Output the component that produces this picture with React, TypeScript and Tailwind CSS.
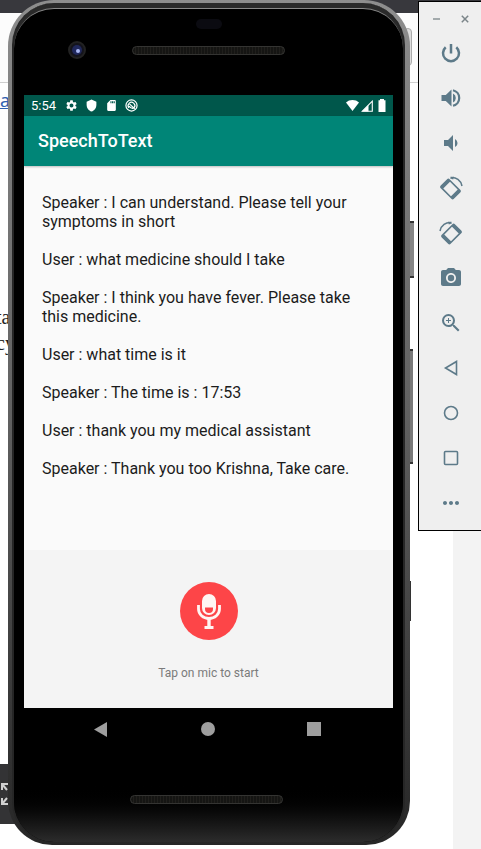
import type { ReactNode } from "react";
import {
  MdCameraAlt,
  MdMoreHoriz,
  MdSdCard,
  MdSettings,
  MdShield,
  MdVolumeDown,
  MdZoomIn,
} from "react-icons/md";

const messages = [
  { from: "Speaker", text: "I can understand. Please tell your symptoms in short" },
  { from: "User", text: "what medicine should I take" },
  { from: "Speaker", text: "I think you have fever. Please take this medicine." },
  { from: "User", text: "what time is it" },
  { from: "Speaker", text: "The time is : 17:53" },
  { from: "User", text: "thank you my medical assistant" },
  { from: "Speaker", text: "Thank you too Krishna, Take care." },
];

function RotateIcon({ mirrored = false }: { mirrored?: boolean }) {
  return (
    <svg width="24" height="24" viewBox="0 0 24 24" fill="none" className={mirrored ? "-scale-x-100" : ""}>
      <g transform="rotate(45 11.5 13)">
        <rect x="3" y="7.500" width="17" height="11" rx="1" stroke="currentColor" strokeWidth="1.600" />
        <path d="M3 7.500h3v11H3zM17 7.500h3v11h-3z" fill="currentColor" />
      </g>
      <path d="M11.500 1.600C17 .8 22 4.500 23 10" stroke="currentColor" strokeWidth="1.500" />
      <path d="M10.800 2.200l4-1.800-.6 3.200z" fill="currentColor" />
    </svg>
  );
}

const outline = { fill: "none", stroke: "currentColor", strokeWidth: 1.6 };

const tools: { label: string; icon: ReactNode }[] = [
  {
    label: "Power",
    icon: (
      <svg width="24" height="24" viewBox="0 0 24 24" fill="none" stroke="currentColor" strokeWidth="2.500">
        <path d="M12 3v9.500M6.700 6.200a8 8 0 1 0 10.600 0" />
      </svg>
    ),
  },
  {
    label: "Volume up",
    icon: (
      <svg width="24" height="24" viewBox="0 0 24 24" fill="currentColor">
        <path d="M2.500 9v6h4.300l5.700 5.500v-17L6.800 9zM14 7.500v9a5 5 0 0 0 0-9z" />
        <path d="M14 4.200a8 8 0 0 1 0 15.600" fill="none" stroke="currentColor" strokeWidth="2.200" />
      </svg>
    ),
  },
  { label: "Volume down", icon: <MdVolumeDown size={24} /> },
  { label: "Rotate left", icon: <RotateIcon /> },
  { label: "Rotate right", icon: <RotateIcon mirrored /> },
  { label: "Take screenshot", icon: <MdCameraAlt size={24} /> },
  { label: "Zoom", icon: <MdZoomIn size={24} /> },
  {
    label: "Back",
    icon: (
      <svg width="24" height="24" viewBox="0 0 24 24" {...outline}>
        <path d="M17.500 5.500v13L6.500 12z" />
      </svg>
    ),
  },
  {
    label: "Home",
    icon: (
      <svg width="24" height="24" viewBox="0 0 24 24" {...outline}>
        <circle cx="12" cy="12" r="6.500" />
      </svg>
    ),
  },
  {
    label: "Overview",
    icon: (
      <svg width="24" height="24" viewBox="0 0 24 24" {...outline}>
        <rect x="5.500" y="5.500" width="13" height="13" rx="1" />
      </svg>
    ),
  },
  { label: "More", icon: <MdMoreHoriz size={24} /> },
];

function Backdrop() {
  return (
    <div aria-hidden="true" className="absolute inset-0 overflow-hidden bg-white">
      <div className="h-[13px] bg-[#38383d]" />
      <div className="h-[70px] border-b border-[#cfcfcf] bg-[#fcfcfc]" />
      <div className="absolute top-[530px] right-0 bottom-0 w-7 bg-[#f3f3f3]" />
      <div className="absolute top-[88px] left-0 font-['Noto_Sans',sans-serif] text-lg leading-6 text-[#2f5fb0] underline">
        a
      </div>
      <div className="absolute top-[304px] left-0 font-['Liberation_Serif',serif] text-xl leading-[26px] text-[#222]">
        <div className="-ml-1">ta</div>
        <div className="-ml-1">cy</div>
      </div>
      <div className="absolute top-[764px] left-0 flex h-[60px] w-8 items-center bg-[#333335] text-[#d0d0d0]">
        <svg width="8" height="24" viewBox="0 0 8 24" fill="none" stroke="currentColor" strokeWidth="2">
          <path d="M2 8V2h6M2 2l5 6M2 16v6h6M2 22l5-6" />
        </svg>
      </div>
    </div>
  );
}

function SpeakerGrille() {
  return (
    <div className="h-[9px] w-[153px] rounded-full border border-[#343432] bg-[#161614] bg-[repeating-linear-gradient(90deg,#151513_0px,#151513_2px,#201f1c_2px,#201f1c_3px)]" />
  );
}

function StatusBar() {
  return (
    <div className="flex h-[21px] items-center bg-[#00574b] px-[7px] text-white">
      <span className="w-[34px] text-[13px] leading-5">5:54</span>
      <div className="flex flex-1 items-center gap-[7px]">
        <MdSettings size={13} />
        <MdShield size={13} />
        <MdSdCard size={13} />
        <svg width="13" height="13" viewBox="0 0 14 14" fill="none" stroke="currentColor" strokeWidth="1.300">
          <circle cx="7" cy="7" r="6" />
          <path d="M4.200 9.500A3.600 3.600 0 1 1 10 9.200M5 5.500l5.500 5M4.500 7.500c1 2 2.500 2.800 4.500 2.500" />
        </svg>
      </div>
      <div className="flex items-center gap-0.5">
        <svg width="13" height="11" viewBox="0 0 13 11" fill="currentColor">
          <path d="M0 2.500C3.500-.8 9.500-.8 13 2.500L6.500 11z" />
        </svg>
        <svg width="12" height="12" viewBox="0 0 12 12">
          <path d="M11.300 1.200v10H1.300z" fill="none" stroke="currentColor" strokeWidth="1.100" />
          <path d="M7.500 5v6.500H1z" fill="currentColor" />
        </svg>
        <svg width="11" height="13" viewBox="0 0 11 13" fill="currentColor">
          <path d="M5 1.300V0h4v1.300h1.500V13h-7V1.300z" />
        </svg>
      </div>
    </div>
  );
}

function MicIcon() {
  return (
    <svg width="26" height="38" viewBox="0 0 26 38" fill="none">
      <path
        fillRule="evenodd"
        fill="#fff5f3"
        d="M6 9a7 7 0 0 1 14 0v7a7 7 0 0 1-14 0zM9 15.500v1.500a4 4 0 0 0 8 0v-1.500z"
      />
      <path d="M2.500 13v4a10.500 9.500 0 0 0 21 0v-4" stroke="#fff5f3" strokeWidth="2.800" />
      <path d="M13 26v9" stroke="#fff5f3" strokeWidth="3.400" />
      <path d="M8.500 35.500h9" stroke="#fff5f3" strokeWidth="3" />
    </svg>
  );
}

function AppScreen() {
  return (
    <main className="bg-[#fafafa] font-[Roboto,sans-serif]">
      <StatusBar />
      <header className="flex h-[50px] items-center bg-[#008577] px-3.5 text-white shadow-[0_1px_2px_rgba(0,0,0,0.25)]">
        <h1 className="text-lg font-medium">SpeechToText</h1>
      </header>
      <div className="flex min-h-[384px] flex-col gap-[19px] pt-[27px] pr-6 pl-[18px] text-base leading-[19px] text-[#1c1c1c]">
        {messages.map((m) => (
          <p key={m.text}>{`${m.from} : ${m.text}`}</p>
        ))}
      </div>
      <footer className="flex h-[158px] flex-col items-center bg-[#f4f4f4] pt-8">
        <button
          type="button"
          aria-label="Start listening"
          className="flex size-[58px] items-center justify-center rounded-full bg-[#fd4548]"
        >
          <MicIcon />
        </button>
        <p className="mt-6 text-xs leading-[18px] text-[#7b7b7b]">Tap on mic to start</p>
      </footer>
    </main>
  );
}

function Phone() {
  return (
    <div className="relative mx-2 min-w-0 flex-1">
      <div className="absolute top-[28px] -right-0.5 h-[38px] w-2 rounded-sm border border-[#aaa] bg-[#ddd]" />
      <div className="absolute top-[221px] -right-1 h-[57px] w-2 border-y-2 border-[#333] bg-[#858585]" />
      <div className="absolute top-[349px] -right-[3px] h-[115px] w-2 border-y-2 border-[#333] bg-[#7a7a7a]" />
      <div className="absolute top-[581px] -right-px h-10 w-2 bg-[#333]" />
      <div className="relative rounded-t-[46px] rounded-b-[44px] bg-linear-to-b from-[#8e8e8e] via-[#606060] to-[#262626] pt-[3px] pr-[5px] pb-[3px] pl-1">
        <div className="rounded-t-[42px] rounded-b-[40px] border-x-2 border-[#262626] bg-[#2a2a2a] pt-[5px]">
          <div className="rounded-t-[40px] rounded-b-[40px] border-t border-[#8a8a8a] bg-black bg-linear-to-b from-black from-93% to-[#2c2c2c] px-2.5">
            <div className="flex h-[86px] flex-col items-center pt-2.5">
              <div className="h-2.5 w-[26px] rounded-full bg-[#0b0b11]" />
              <div className="mt-3 grid w-full grid-cols-[1fr_auto_1fr] items-center">
                <div className="ml-11 flex size-[18px] items-center justify-center rounded-full border-2 border-[#222] bg-[#14141c]">
                  <div className="flex size-2.5 items-end justify-end rounded-full bg-[#20285c] p-0.5">
                    <div className="size-1 rounded-full bg-[#a9b8f5]" />
                  </div>
                </div>
                <SpeakerGrille />
              </div>
            </div>
            <AppScreen />
            <nav className="flex h-[42px] items-center justify-between pr-[72px] pl-[70px] text-[#9e9e9e]">
              <button type="button" aria-label="Back">
                <svg width="14" height="15" viewBox="0 0 14 15" fill="currentColor">
                  <path d="M13 0v15L0 7.500z" />
                </svg>
              </button>
              <button type="button" aria-label="Home" className="size-3.5 rounded-full bg-[#9e9e9e]" />
              <button type="button" aria-label="Overview" className="size-3.5 bg-[#9e9e9e]" />
            </nav>
            <div className="flex h-[92px] justify-center pt-[45px] pr-1">
              <SpeakerGrille />
            </div>
          </div>
        </div>
      </div>
    </div>
  );
}

function EmulatorToolbar() {
  return (
    <aside className="relative mt-px flex w-[63px] shrink-0 flex-col border-y border-l border-black bg-[#efefef] pb-[5px] text-[#5d7a89]">
      <div className="flex h-7 items-center justify-between pt-1.5 pr-3 pl-3.5 text-[#7b8589]">
        <button type="button" aria-label="Minimize">
          <svg width="8" height="8" viewBox="0 0 8 8" stroke="currentColor" strokeWidth="1.300">
            <path d="M0 4h7" />
          </svg>
        </button>
        <button type="button" aria-label="Close">
          <svg width="8" height="8" viewBox="0 0 8 8" stroke="currentColor" strokeWidth="1.500">
            <path d="M.8.8l6.400 6.400M7.200.8L.8 7.200" />
          </svg>
        </button>
      </div>
      {tools.map((tool) => (
        <button
          key={tool.label}
          type="button"
          aria-label={tool.label}
          className="flex h-[45px] w-full items-center justify-center pl-0.5"
        >
          {tool.icon}
        </button>
      ))}
    </aside>
  );
}

export default function App() {
  return (
    <div className="relative flex min-h-screen items-start bg-white font-[Roboto,sans-serif]">
      <Backdrop />
      <Phone />
      <EmulatorToolbar />
    </div>
  );
}
